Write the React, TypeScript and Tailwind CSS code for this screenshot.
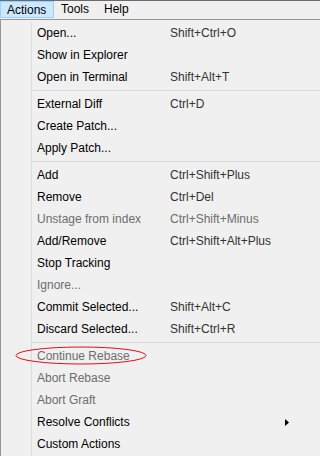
import React from "react";

type Item = { label: string; shortcut?: string; disabled?: boolean; submenu?: boolean } | "sep";

const items: Item[] = [
  { label: "Open...", shortcut: "Shift+Ctrl+O" },
  { label: "Show in Explorer" },
  { label: "Open in Terminal", shortcut: "Shift+Alt+T" },
  "sep",
  { label: "External Diff", shortcut: "Ctrl+D" },
  { label: "Create Patch..." },
  { label: "Apply Patch..." },
  "sep",
  { label: "Add", shortcut: "Ctrl+Shift+Plus" },
  { label: "Remove", shortcut: "Ctrl+Del" },
  { label: "Unstage from index", shortcut: "Ctrl+Shift+Minus", disabled: true },
  { label: "Add/Remove", shortcut: "Ctrl+Shift+Alt+Plus" },
  { label: "Stop Tracking" },
  { label: "Ignore...", disabled: true },
  { label: "Commit Selected...", shortcut: "Shift+Alt+C" },
  { label: "Discard Selected...", shortcut: "Shift+Ctrl+R" },
  "sep",
  { label: "Continue Rebase", disabled: true },
  { label: "Abort Rebase", disabled: true },
  { label: "Abort Graft", disabled: true },
  { label: "Resolve Conflicts", submenu: true },
  { label: "Custom Actions" },
];

export default function App() {
  return (
    <div
      className="relative h-[456px] w-full min-w-[296px] overflow-hidden bg-[#f0f0f0] text-[12px] text-black"
      style={{ fontFamily: '"Segoe UI", "Liberation Sans", Arial, sans-serif' }}
    >
      {/* menubar */}
      <div className="flex h-[19px] border-t border-[#6b6b6b] bg-[#f0f0f0] leading-[17px]">
        <div className="h-[17px] w-[54px] border border-[#99d1ff] bg-[#cce8ff] pl-[6px]">Actions</div>
        <div className="w-[43px] pl-[7px]">Tools</div>
        <div className="pl-[7px]">Help</div>
      </div>
      {/* menu */}
      <div className="flex h-full border-l border-t border-[#979797] pt-[2px]">
        <div className="w-[31px] shrink-0 border-r border-[#dadada]" />
        <div className="flex flex-1 flex-col">
          {items.map((it, i) =>
            it === "sep" ? (
              <div key={i} className="flex h-[5px] items-center">
                <div className="h-px w-full bg-[#dadada]" />
              </div>
            ) : (
              <div
                key={i}
                className={`flex h-[22px] w-[263px] items-center pl-[5px] pr-[6px] ${it.disabled ? "text-[#6d6d6d]" : "text-black"}`}
              >
                <div className="w-[133px] shrink-0 whitespace-nowrap">{it.label}</div>
                <div className={`flex-1 whitespace-nowrap ${it.disabled ? "text-[#6d6d6d]" : "text-[#333]"}`}>
                  {it.shortcut ?? ""}
                </div>
                {it.submenu && (
                  <svg width="4" height="7" viewBox="0 0 4 7" className="shrink-0">
                    <path d="M0 0 L4 3.5 L0 7 Z" fill="#000" />
                  </svg>
                )}
              </div>
            )
          )}
        </div>
      </div>
      {/* red annotation ellipse */}
      <svg className="pointer-events-none absolute left-0 top-0" width="296" height="456">
        <ellipse cx="81" cy="355.5" rx="65" ry="8.5" fill="none" stroke="#e0101a" strokeWidth="1" />
      </svg>
    </div>
  );
}
